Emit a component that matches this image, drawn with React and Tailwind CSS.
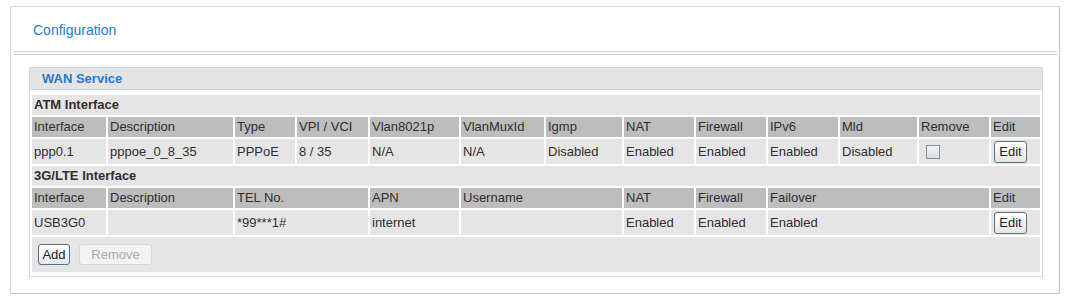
import React from 'react';

const cols = 'grid-cols-[74px_125px_60px_71px_89px_83px_76px_70px_70px_70px_77px_70px_49px]';

const Cell = ({ children, head, span = '', h = 'h-[25px]' }) => (
    <div className={`${span} ${h} flex items-center pl-[2px] whitespace-nowrap ${head ? 'bg-[#bdbdbd]' : 'bg-[#e5e5e5]'}`}>
        {children}
    </div>
);

const EditButton = () => (
    <button className="ml-[1px] w-[33px] h-[22px] rounded-[3px] border border-[#56718f] bg-gradient-to-b from-white to-[#e6e6e6] text-[13px] text-[#222] leading-none">
        Edit
    </button>
);

const atmHead = ['Interface', 'Description', 'Type', 'VPI / VCI', 'Vlan8021p', 'VlanMuxId', 'Igmp', 'NAT', 'Firewall', 'IPv6', 'Mld', 'Remove', 'Edit'];
const atmRow = ['ppp0.1', 'pppoe_0_8_35', 'PPPoE', '8 / 35', 'N/A', 'N/A', 'Disabled', 'Enabled', 'Enabled', 'Enabled', 'Disabled'];

const App = () => {
    return (
        <div className="w-[1070px] h-[298px] bg-white pt-[6px] pl-[10px] text-[13px] text-[#2e2e2e]" style={{ fontFamily: '"Liberation Sans", Arial, sans-serif' }}>
            <div className="w-[1050px] h-[288px] border border-[#d8d8d8] border-r-[#c4c4c4] border-b-[#c4c4c4]">

                <div className="h-[44px] flex items-center pl-[22px] pt-[2px] text-[14px] text-[#1f7bcb]">
                    Configuration
                </div>
                <div className="h-[4px] ml-[3px] mr-[2px] border-t border-b border-[#cdcdcd]"></div>

                <div className="mt-[12px] ml-[18px] w-[1014px] border border-[#c9d8ea]">
                    <div className="h-[22px] bg-[#e4e4e4] border-b border-[#c9d8ea] flex items-center pl-[12px] font-bold text-[13px] text-[#1f7bcb]">
                        WAN Service
                    </div>

                    <div className={`grid ${cols} gap-[2px] pt-[5px] px-[2px] pb-[4px]`}>
                        <Cell span="col-span-full" h="h-[20px]"><span className="font-bold">ATM Interface</span></Cell>
                        {atmHead.map((t) => (
                            <Cell key={t} head h="h-[20px]">{t}</Cell>
                        ))}
                        {atmRow.map((t, i) => (
                            <Cell key={i}>{t}</Cell>
                        ))}
                        <Cell>
                            <span className="ml-[5px] mt-[1px] w-[14px] h-[14px] border border-[#7f90a2] bg-gradient-to-b from-[#f6f6f6] to-[#dcdcdc]"></span>
                        </Cell>
                        <Cell><EditButton /></Cell>

                        <Cell span="col-span-full" h="h-[20px]"><span className="font-bold">3G/LTE Interface</span></Cell>
                        <Cell head h="h-[20px]">Interface</Cell>
                        <Cell head h="h-[20px]">Description</Cell>
                        <Cell head h="h-[20px]" span="col-span-2">TEL No.</Cell>
                        <Cell head h="h-[20px]">APN</Cell>
                        <Cell head h="h-[20px]" span="col-span-2">Username</Cell>
                        <Cell head h="h-[20px]">NAT</Cell>
                        <Cell head h="h-[20px]">Firewall</Cell>
                        <Cell head h="h-[20px]" span="col-span-3">Failover</Cell>
                        <Cell head h="h-[20px]">Edit</Cell>

                        <Cell>USB3G0</Cell>
                        <Cell></Cell>
                        <Cell span="col-span-2">*99***1#</Cell>
                        <Cell>internet</Cell>
                        <Cell span="col-span-2"></Cell>
                        <Cell>Enabled</Cell>
                        <Cell>Enabled</Cell>
                        <Cell span="col-span-3">Enabled</Cell>
                        <Cell><EditButton /></Cell>

                        <div className="col-span-full h-[35px] bg-[#e5e5e5] flex items-center pl-[6px] gap-[9px]">
                            <button className="w-[32px] h-[21px] rounded-[3px] border border-[#56718f] bg-gradient-to-b from-white to-[#e6e6e6] text-[13px] text-[#222] leading-none">
                                Add
                            </button>
                            <button disabled className="w-[73px] h-[21px] rounded-[3px] border border-[#d6d6d6] bg-[#f3f3f1] text-[13px] text-[#a8a8a8] leading-none">
                                Remove
                            </button>
                        </div>
                    </div>
                </div>

            </div>
        </div>
    );
};

export default App;
